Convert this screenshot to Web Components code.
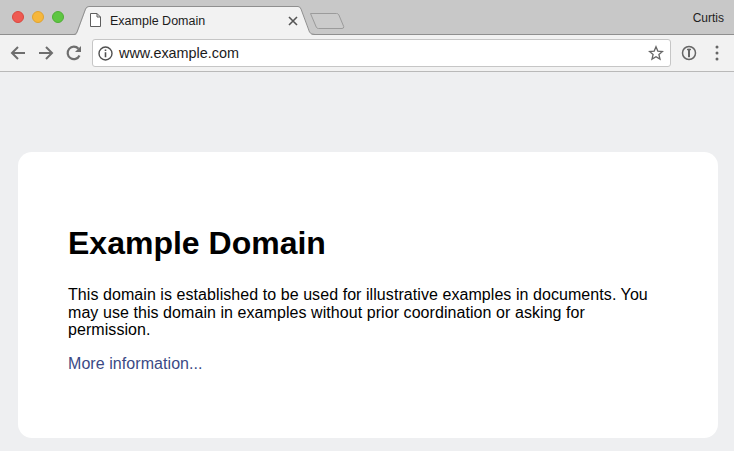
<!DOCTYPE html>
<html lang="en">
<head>
<meta charset="utf-8">
<title>Example Domain</title>
<style>
html,body{margin:0;height:100%;overflow:hidden;background:#eeeff1;font-family:"Liberation Sans",Arial,sans-serif}
</style>
</head>
<body>
<browser-window>
  <tab-strip slot="chrome" profile="Curtis">
    <browser-tab>Example Domain</browser-tab>
  </tab-strip>
  <nav-toolbar slot="chrome" url="www.example.com"></nav-toolbar>
  <domain-card>
    <span slot="title">Example Domain</span>
    <span>This domain is established to be used for illustrative examples in documents. You may use this domain in examples without prior coordination or asking for permission.</span>
    <a slot="link" href="#">More information...</a>
  </domain-card>
</browser-window>
<script>
function define(name, html){
  customElements.define(name, class extends HTMLElement{
    constructor(){
      super();
      this.attachShadow({mode:'open'}).innerHTML=html;
    }
    connectedCallback(){
      this.shadowRoot.querySelectorAll('[data-attr]').forEach(n=>{n.textContent=this.getAttribute(n.dataset.attr)||''});
    }
  });
}
define('browser-window',`<style>
:host{display:flex;flex-direction:column;width:734px;height:451px;overflow:hidden;background:#eeeff1}
main{flex:1;display:flex;flex-direction:column;padding:80px 16px 13px 18px}
</style><slot name="chrome"></slot><main><slot></slot></main>`);

define('tab-strip',`<style>
:host{display:flex;align-items:flex-end;height:34px;background:#c8c8c8;border-bottom:1px solid #8f8f8f;position:relative;z-index:1;font-size:12px;color:#222}
.lights{display:flex;gap:8px;padding:0 0 0 12px;align-self:flex-start;margin-top:11px;width:60px;flex:none}
i{width:12px;height:12px;border-radius:50%;display:block;box-sizing:border-box}
.r{background:#ee5a52;border:.5px solid #d9483f}.y{background:#f6b73c;border:.5px solid #e0a331}.g{background:#5ec642;border:.5px solid #4fae36}
.new{width:36px;height:18px;margin:0 auto 4px -6px;flex:none;display:block}
.who{margin:0 10px 9px auto;align-self:flex-end;color:#1e1e1e;line-height:14px}
</style>
<div class="lights"><i class="r"></i><i class="y"></i><i class="g"></i></div>
<slot></slot>
<svg class="new" viewBox="0 0 36 18"><path d="M1.500 1.500H27.500Q29 1.500 29.800 2.800L34.700 14.500Q35 16.500 33 16.500H9.500Q8 16.500 7.300 15.200Z" fill="#cbcbcb" stroke="#9b9b9b"/></svg>
<span class="who" data-attr="profile"></span>`);

define('browser-tab',`<style>
:host{display:flex;align-items:center;position:relative;width:243px;height:29px;margin:0 0 -1px 0;flex:none;font-size:12.500px;color:#1c1c1c}
svg.bg{position:absolute;inset:0;width:100%;height:100%}
.row{position:relative;display:flex;align-items:center;width:100%;padding:1px 17px 0 18px;box-sizing:border-box;height:100%}
.doc{width:11px;height:14px;flex:none;margin-right:9px;position:relative;top:-1px}
.t{flex:1;white-space:nowrap;line-height:15px}
.x{width:10px;height:10px;flex:none}
</style>
<svg class="bg" viewBox="0 0 243 29" preserveAspectRatio="none"><path d="M0 29H2Q4.500 29 5.500 26.500L14 3Q15 1 17 .5H226Q228 .5 229 3L238 26.500Q239 29 243 29Z" fill="#f2f2f2"/><path d="M0 28.500H2Q4 28.500 5 26L13.500 3Q14.500 .5 17 .5H226Q228 .5 229 3L237.500 26Q238.500 28.500 243 28.500" fill="none" stroke="#8f8f8f"/></svg>
<div class="row">
<svg class="doc" viewBox="0 0 11 14"><path d="M.5.5H7L10.500 4V13.500H.5ZM7 .5V4H10.500" fill="#fff" stroke="#5e5e5e"/></svg>
<span class="t"><slot></slot></span>
<svg class="x" viewBox="0 0 10 10"><path d="M1 1L9 9M9 1L1 9" stroke="#555" stroke-width="1.600" fill="none"/></svg>
</div>`);

define('nav-toolbar',`<style>
:host{display:flex;align-items:center;height:36px;background:#f2f2f2;border-bottom:1px solid #b9b9b9;padding:0 0 0 9px}
svg{display:block;flex:none}
.nav{display:flex;gap:10px;margin-right:9px}
.box{flex:none;width:579px;height:28px;box-sizing:border-box;margin-right:10px;background:#fff;border:1px solid #c6c6c6;border-radius:3px;display:flex;align-items:center;padding:0 6px 0 5px;font-size:14.400px;color:#1b1b1b}
.u{flex:1;margin-left:6px;white-space:nowrap}
.right{display:flex;align-items:center;gap:18px}
</style>
<div class="nav">
<svg width="18" height="18" viewBox="0 0 18 18"><path d="M16 9H3M9 3L3 9L9 15" fill="none" stroke="#6e6e6e" stroke-width="2"/></svg>
<svg width="18" height="18" viewBox="0 0 18 18"><path d="M2 9H15M9 3L15 9L9 15" fill="none" stroke="#6e6e6e" stroke-width="2"/></svg>
<svg width="18" height="18" viewBox="0 0 18 18"><path d="M14.500 11.500A6.200 6.200 0 1 1 13.500 4.800" fill="none" stroke="#6e6e6e" stroke-width="2.200"/><path d="M16 2V8H10Z" fill="#6e6e6e"/></svg>
</div>
<div class="box">
<svg width="15" height="15" viewBox="0 0 15 15"><circle cx="7.500" cy="7.500" r="6.500" fill="none" stroke="#505050" stroke-width="1.400"/><path d="M6.700 3.500H8.300V5H6.700ZM6.700 6.200H8.300V11.300H6.700Z" fill="#505050"/></svg>
<span class="u" data-attr="url"></span>
<svg width="16" height="16" viewBox="0 0 16 16"><path d="M8 1.800L9.800 6.100L14.500 6.500L10.900 9.500L12 14.100L8 11.700L4 14.100L5.100 9.500L1.500 6.500L6.200 6.100Z" fill="none" stroke="#666" stroke-width="1.300"/></svg>
</div>
<div class="right">
<svg width="16" height="16" viewBox="0 0 16 16"><circle cx="8" cy="8" r="6.500" fill="none" stroke="#666" stroke-width="1.500"/><rect x="7" y="3.800" width="2" height="8.400" fill="#666"/><rect x="6" y="3.800" width="4" height="1.400" fill="#666"/></svg>
<svg width="4" height="16" viewBox="0 0 4 16"><circle cx="2" cy="2" r="1.500" fill="#666"/><circle cx="2" cy="8" r="1.500" fill="#666"/><circle cx="2" cy="14" r="1.500" fill="#666"/></svg>
</div>`);

define('domain-card',`<style>
:host{display:block;flex:1;background:#fff;border-radius:14px;padding:73px 50px 0;color:#000;font-size:16px;line-height:17.500px;letter-spacing:.065px}
h1{margin:0 0 24px;font-size:32px;line-height:37px;font-weight:700;letter-spacing:0}
p{margin:0 0 16px;width:584px}
::slotted(a){color:#3b4a85;text-decoration:none}
</style>
<h1><slot name="title"></slot></h1>
<p><slot></slot></p>
<p><slot name="link"></slot></p>`);
</script>
</body>
</html>
